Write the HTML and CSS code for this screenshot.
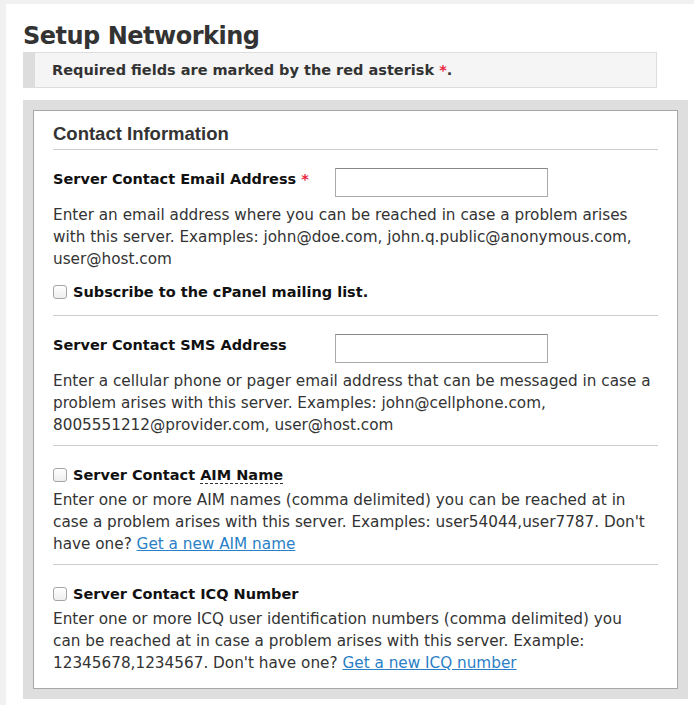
FILE: index.html
```html
<!DOCTYPE html>
<html>
<head>
<meta charset="utf-8">
<link rel="stylesheet" href="styles.css">
</head>
<body>
<div class="page">
  <h1 class="title">Setup Networking</h1>
  <div class="notice">Required fields are marked by the red asterisk <span class="req">*</span>.</div>
  <div class="panel">
    <div class="box">
      <h2 class="section-title">Contact Information</h2>

      <div class="field">
        <div class="field-row">
          <label class="label label-fixed">Server Contact Email Address <span class="req">*</span></label>
          <input class="text-input" type="text">
        </div>
        <p class="desc">Enter an email address where you can be reached in case a problem arises with this server. Examples: john@doe.com, john.q.public@anonymous.com, user@host.com</p>
        <label class="check-row"><input type="checkbox" class="cb"><span class="label">Subscribe to the cPanel mailing list.</span></label>
      </div>

      <div class="field">
        <div class="field-row">
          <label class="label label-fixed">Server Contact SMS Address</label>
          <input class="text-input" type="text">
        </div>
        <p class="desc">Enter a cellular phone or pager email address that can be messaged in case a problem arises with this server. Examples: john@cellphone.com, 8005551212@provider.com, user@host.com</p>
      </div>

      <div class="field field-check">
        <label class="check-row tight"><input type="checkbox" class="cb"><span class="label">Server Contact <abbr class="abbr" title="AOL Instant Messenger">AIM Name</abbr></span></label>
        <p class="desc desc-tight">Enter one or more AIM names (comma delimited) you can be reached at in case a problem arises with this server. Examples: user54044,user7787. Don't have one? <a class="link" href="#">Get a new AIM name</a></p>
      </div>

      <div class="field field-check last">
        <label class="check-row tight"><input type="checkbox" class="cb"><span class="label">Server Contact ICQ Number</span></label>
        <p class="desc desc-tight">Enter one or more ICQ user identification numbers (comma delimited) you<br>can be reached at in case a problem arises with this server. Example: 12345678,1234567. Don't have one? <a class="link" href="#">Get a new ICQ number</a></p>
      </div>
    </div>
  </div>
</div>
</body>
</html>
```

FILE: styles.css
```css
html, body {
  margin: 0;
  padding: 0;
}
body {
  background: #f1f1f1;
  font-family: "DejaVu Sans", sans-serif;
  color: #333;
}
.page {
  margin: 4px 0 0 6px;
  background: #fff;
  padding: 17px 0 7px 17px;
  min-height: calc(100vh - 4px);
  box-sizing: border-box;
}
.title {
  margin: 0;
  font-size: 24px;
  letter-spacing: -0.5px;
  line-height: 30px;
  font-weight: bold;
  color: #333;
}
.notice {
  margin-top: 1px;
  width: 634px;
  box-sizing: border-box;
  height: 36px;
  background: #f5f5f5;
  border: 1px solid #ddd;
  border-left: 12px solid #ddd;
  padding: 0 0 0 17px;
  font-size: 14.5px;
  font-weight: bold;
  line-height: 34px;
  color: #333;
}
.req {
  color: #e8243c;
}
.panel {
  margin-top: 12px;
  width: 665px;
  box-sizing: border-box;
  background: #dedede;
  padding: 10px;
}
.box {
  background: #fff;
  border: 1px solid #a8a8a8;
  padding: 0 19px 14px 19px;
}
.section-title {
  margin: 0;
  font-family: "Liberation Sans", Arial, sans-serif;
  font-size: 18.5px;
  font-weight: bold;
  color: #333;
  line-height: 22px;
  padding-top: 12px;
  padding-bottom: 4px;
  border-bottom: 1px solid #ccc;
}
.field {
  border-bottom: 1px solid #ccc;
  padding: 18px 0 12px;
}
.field + .field {
  padding-bottom: 9px;
}
.field.field-check {
  padding-top: 18px;
}
.field.last {
  border-bottom: none;
  padding-bottom: 0;
}
.field-row {
  display: flex;
  align-items: flex-start;
  height: 29px;
}
.label {
  font-size: 14.5px;
  font-weight: bold;
  color: #111;
  line-height: 22px;
}
.label-fixed {
  width: 282px;
}
.text-input {
  width: 213px;
  height: 29px;
  box-sizing: border-box;
  border: 1px solid #aaa;
  border-top-color: #888;
  margin: 0;
  padding: 0;
  background: #fff;
}
.desc {
  margin: 7px 0 0;
  font-size: 15.25px;
  line-height: 22px;
  color: #333;
}
.desc.desc-tight {
  margin-top: 3px;
}
.check-row {
  display: flex;
  align-items: center;
  margin-top: 11px;
  height: 22px;
}
.check-row.tight {
  margin-top: 0;
}
.cb {
  appearance: none;
  -webkit-appearance: none;
  width: 14px;
  height: 14px;
  margin: 0 6px 0 0;
  border: 1px solid #a5a5a5;
  border-radius: 3px;
  background: linear-gradient(#fff, #eee);
  box-sizing: border-box;
}
.abbr {
  text-decoration: none;
  border-bottom: 1px dashed #333;
}
.link {
  color: #2a7fc6;
  text-decoration: underline;
}
```
